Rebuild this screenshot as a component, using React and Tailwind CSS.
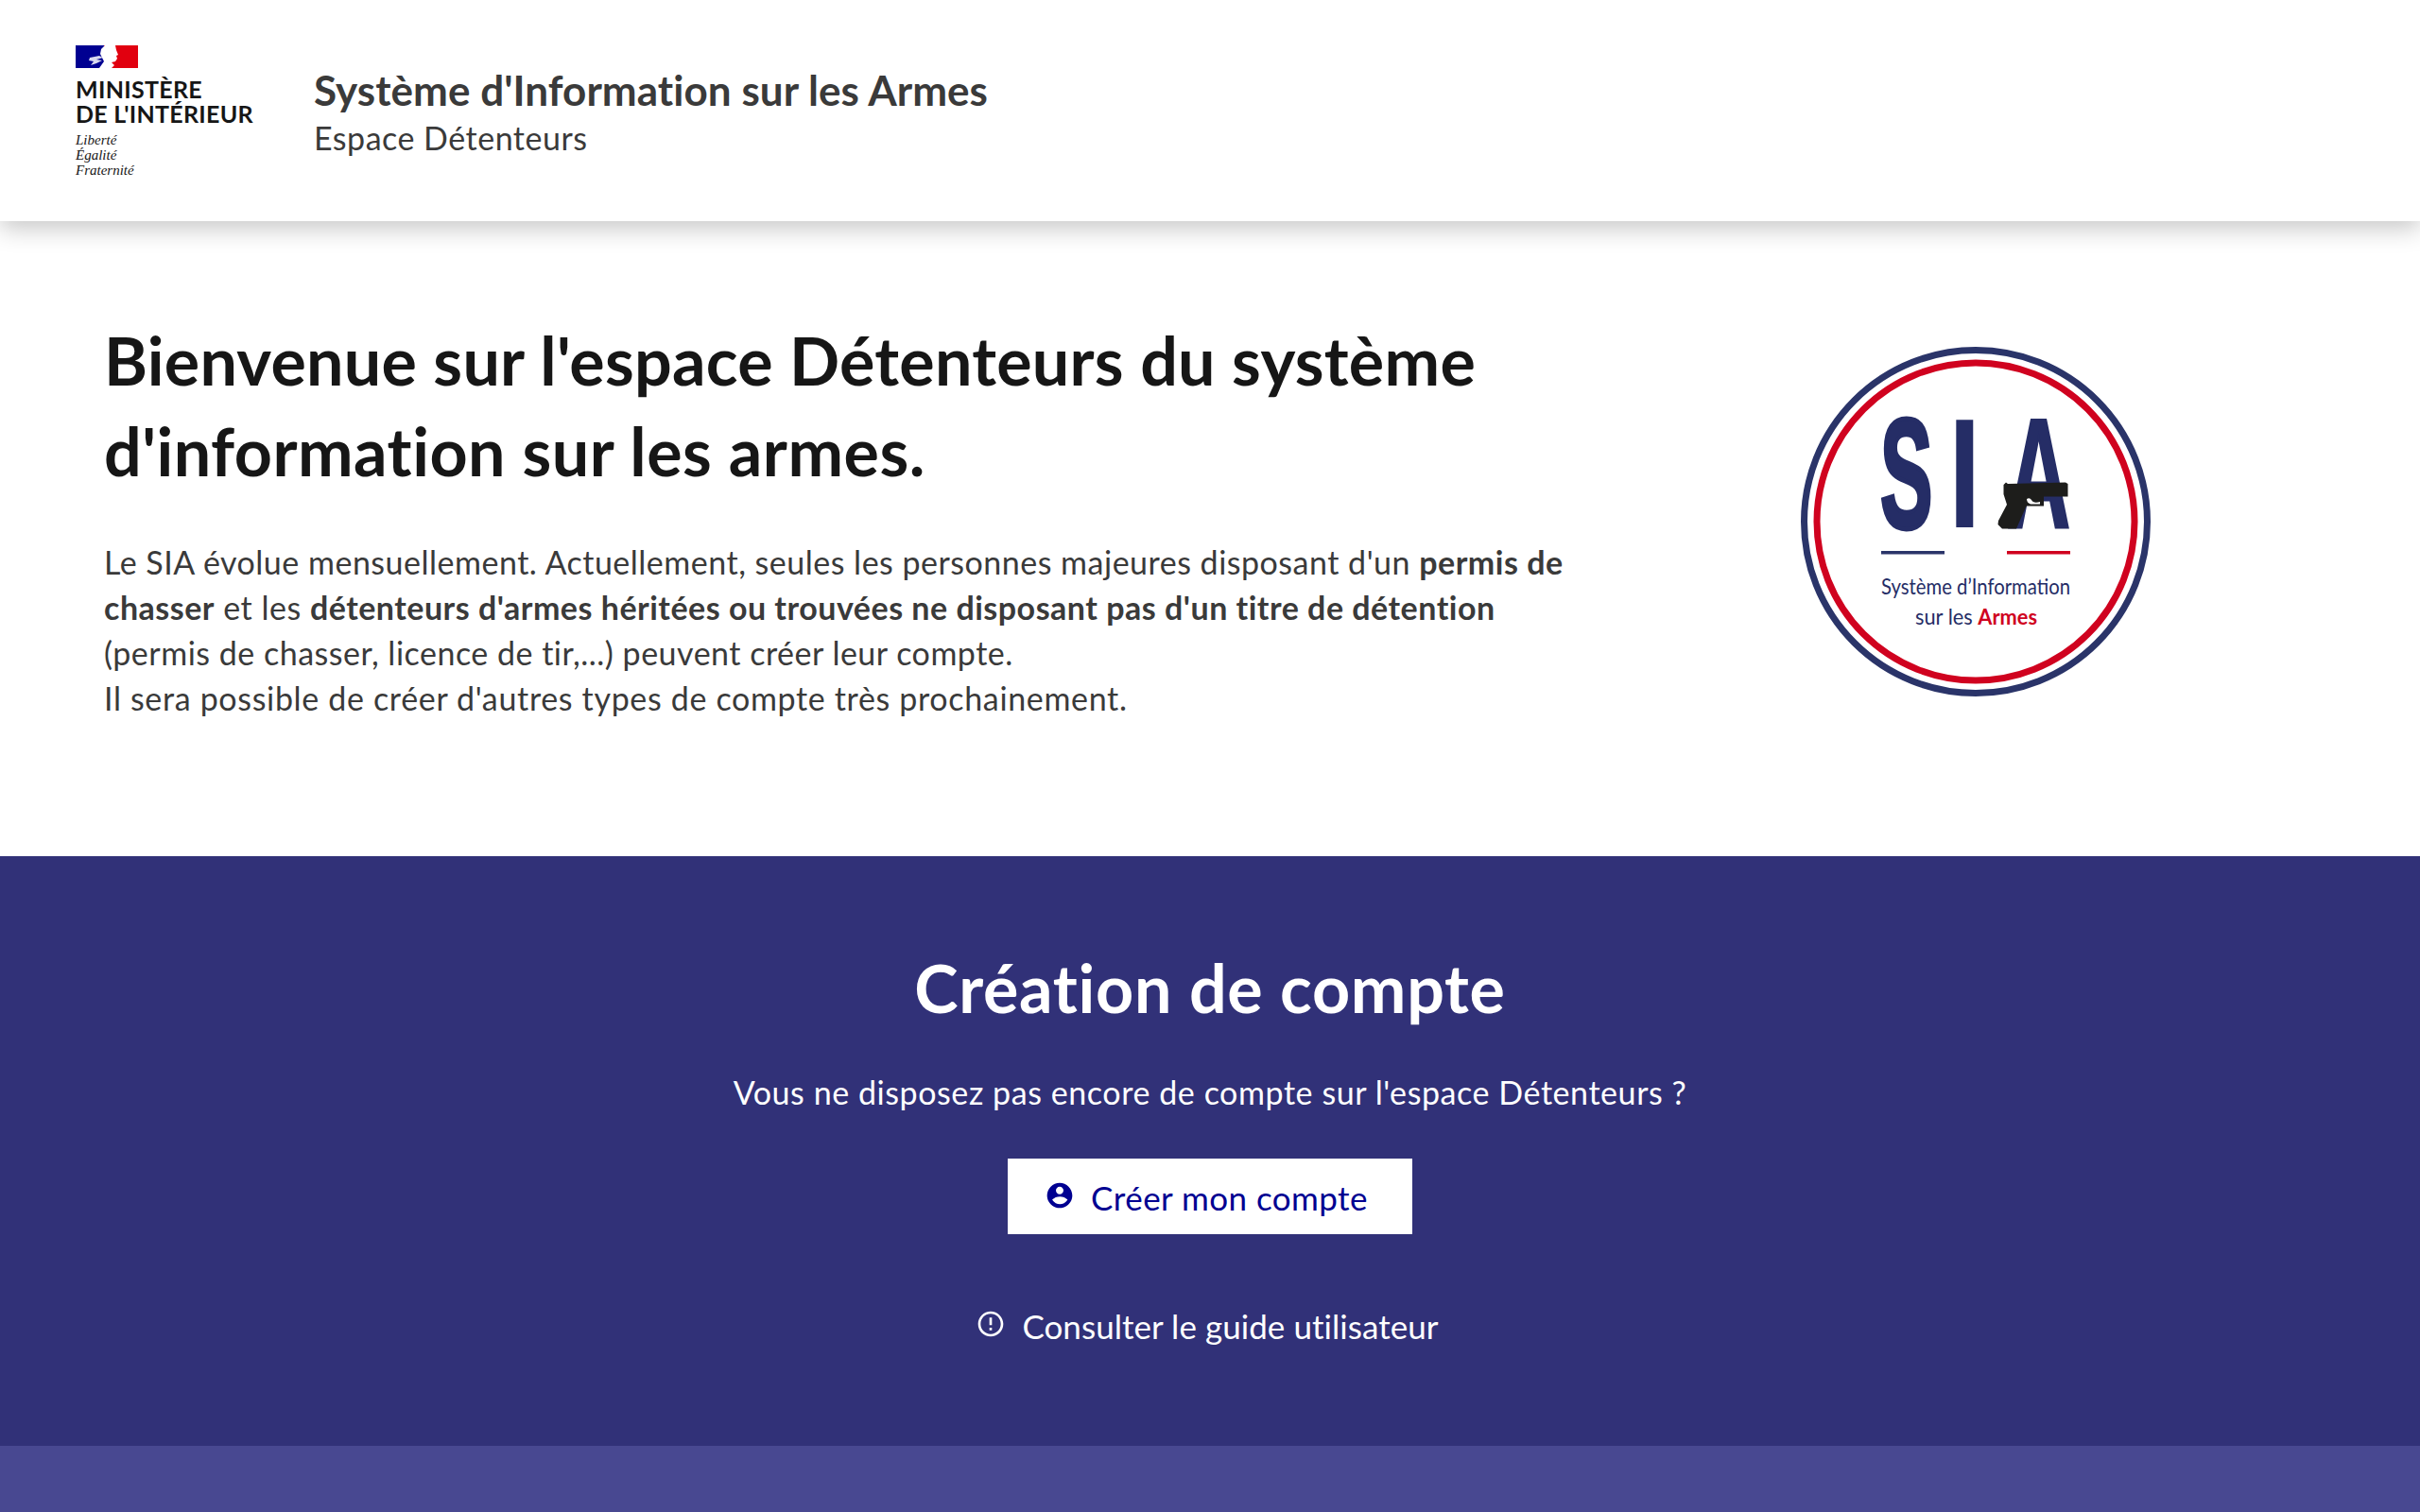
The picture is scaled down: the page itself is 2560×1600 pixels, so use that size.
import React from "react";
import { RiAccountCircleFill, RiErrorWarningLine } from "react-icons/ri";

const font = { fontFamily: "Lato, 'Noto Sans', sans-serif" };

function Flag() {
  return (
    <svg width="66" height="24" viewBox="0 0 66 24" className="block">
      <rect width="30" height="24" fill="#000091" />
      <rect x="30" width="36" height="24" fill="#e1000f" />
      <path d="M25 24 L30 17 L26 9 L27 4 L31 0 L42 0 L43 5 L45 10 L43 11 L44 14 L42 17 L38 18 L41 21 L38 24 Z" fill="#fff" />
      <path d="M15 13 L25 11 L29 13 L22 15 L28 16 L22 19 L16 21 L19 17 L14 16 Z" fill="#fff" opacity="0.85" />
    </svg>
  );
}

function SiaLogo() {
  const navy = "#252d66";
  const big = { fontFamily: "'Liberation Sans', sans-serif", fontWeight: 700, fontSize: 166 };
  return (
    <svg width="400" height="400" viewBox="0 0 400 400" className="block">
      <circle cx="200" cy="202" r="181.5" fill="none" stroke="#2a3469" strokeWidth="7" />
      <circle cx="200" cy="202" r="168" fill="none" stroke="#d0021f" strokeWidth="7" />
      <text transform="translate(99 208) scale(0.5 1)" fill={navy} stroke={navy} strokeWidth="5" style={big}>S</text>
      <text transform="translate(171 208) scale(0.75 1)" fill={navy} style={big}>I</text>
      <text transform="translate(233 208) scale(0.56 1)" fill={navy} stroke={navy} strokeWidth="3" style={big}>A</text>
      <path d="M229.5 163 L232 160.5 L234 162 L295 160.5 L297.5 162 L297.5 175.5 L272 175.5 L272 185.5 L253.5 185.5 L243 209.5 L228 209.5 L223.5 205 L224 201 L233 184 L229.5 173 Z" fill="#1d1d1b" />
      <path d="M254 178 Q257 176 259 179 Q261 183 268 181 L268 183.5 L258 183.5 Q254 182 254 178 Z" fill="#fff" />
      <rect x="100" y="233" width="67" height="3.5" fill="#2a3469" />
      <rect x="233" y="233" width="67" height="3.5" fill="#d0021f" />
      <text x="100" y="279" textLength="200" lengthAdjust="spacingAndGlyphs" fontSize="23" fill={navy} style={{ fontFamily: "Lato, sans-serif" }}>Système d’Information</text>
      <text x="136" y="311" textLength="129" lengthAdjust="spacingAndGlyphs" fontSize="23" fill={navy} style={{ fontFamily: "Lato, sans-serif" }}>sur les <tspan fill="#d0021f" fontWeight="700">Armes</tspan></text>
    </svg>
  );
}

export default function App() {
  return (
    <div style={font} className="min-h-[1600px] bg-white flex flex-col">
      <header className="relative z-10 h-[234px] bg-white flex items-start pl-[80px] shadow-[0_8px_24px_rgba(0,0,0,0.22)]">
        <div className="pt-[48px] w-[252px] shrink-0">
          <Flag />
          <div className="mt-[9px] text-[#161616] font-bold text-[25px] leading-[26px] tracking-[0.3px]">
            <div>MINISTÈRE</div>
            <div>DE L'INTÉRIEUR</div>
          </div>
          <div className="mt-[7px] text-[#161616] italic text-[15px] leading-[16px]" style={{ fontFamily: "'Liberation Serif', serif" }}>
            <div>Liberté</div>
            <div>Égalité</div>
            <div>Fraternité</div>
          </div>
        </div>
        <div className="pt-[65px] text-[#3a3a3a]">
          <div className="text-[44px] leading-[60px] font-bold tracking-[0.05px]">Système d'Information sur les Armes</div>
          <div className="text-[34px] leading-[42px] tracking-[0.5px]">Espace Détenteurs</div>
        </div>
      </header>

      <section className="h-[672px] flex">
        <div className="w-[1620px] pl-[110px] shrink-0 pt-[99px]">
          <h1 className="text-[#161616] font-bold text-[70px] leading-[96px] tracking-[0.25px]">
            Bienvenue sur l'espace Détenteurs du système<br />
            <span className="tracking-[0.48px]">d'information sur les armes.</span>
          </h1>
          <p className="mt-[46px] text-[#3a3a3a] text-[34px] leading-[48px] tracking-[0.5px] whitespace-nowrap">
            Le SIA évolue mensuellement. Actuellement, seules les personnes majeures disposant d'un <b>permis de</b><br />
            <b>chasser</b> et les <b>détenteurs d'armes héritées ou trouvées ne disposant pas d'un titre de détention</b><br />
            (permis de chasser, licence de tir,...) peuvent créer leur compte.<br />
            <span className="tracking-[0.66px]">Il sera possible de créer d'autres types de compte très prochainement.</span>
          </p>
        </div>
        <div className="flex-1 flex justify-center pt-[116px]">
          <SiaLogo />
        </div>
      </section>

      <section className="h-[624px] bg-[#313178] flex flex-col items-center text-white">
        <h2 className="mt-[91px] font-bold text-[70px] leading-[96px] tracking-[0.7px]">Création de compte</h2>
        <p className="mt-[39px] text-[34px] leading-[48px] tracking-[0.57px]">Vous ne disposez pas encore de compte sur l'espace Détenteurs ?</p>
        <a className="mt-[46px] w-[428px] h-[80px] bg-white text-[#000091] flex items-center justify-center gap-[17px] text-[35px] tracking-[0.45px] pt-[2px] pr-[8px]">
          <RiAccountCircleFill className="w-[32px] h-[32px] -mt-[4px]" />
          <span>Créer mon compte</span>
        </a>
        <a className="mt-[73px] flex items-center gap-[17px] text-[35px] leading-[48px] tracking-[0.05px] pr-[6px]">
          <RiErrorWarningLine className="w-[32px] h-[32px] -mt-[4px]" />
          <span>Consulter le guide utilisateur</span>
        </a>
      </section>

      <footer className="flex-1 bg-[#484891]" />
    </div>
  );
}
